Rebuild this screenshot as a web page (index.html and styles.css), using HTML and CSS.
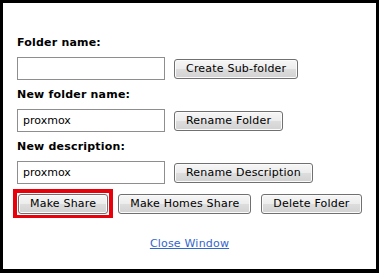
FILE: index.html
```html
<!DOCTYPE html>
<html lang="en">
<head>
  <meta charset="UTF-8">
  <title>Folder Properties</title>
  <link rel="stylesheet" href="styles.css">
</head>
<body>
  <div class="window">
    <div class="label">Folder name:</div>
    <div class="row">
      <input type="text" class="field" value="">
      <button class="btn">Create Sub-folder</button>
    </div>
    <div class="label">New folder name:</div>
    <div class="row">
      <input type="text" class="field" value="proxmox">
      <button class="btn">Rename Folder</button>
    </div>
    <div class="label">New description:</div>
    <div class="row">
      <input type="text" class="field" value="proxmox">
      <button class="btn">Rename Description</button>
    </div>
    <div class="actions">
      <span class="highlight"><button class="btn">Make Share</button></span>
      <button class="btn">Make Homes Share</button>
      <button class="btn">Delete Folder</button>
    </div>
    <div class="close">
      <a href="#">Close Window</a>
    </div>
  </div>
</body>
</html>
```

FILE: styles.css
```css
html, body {
  margin: 0;
  padding: 0;
  background-color: #000;
}
body {
  font-family: "DejaVu Sans", Verdana, sans-serif;
  font-size: 11px;
  color: #000;
}
.window {
  box-sizing: border-box;
  width: 379px;
  height: 273px;
  border: 3px solid #000;
  border-bottom-width: 4px;
  background-color: #fff;
  padding: 33px 0 0 14px;
}
.label {
  font-weight: bold;
  line-height: 14px;
  height: 14px;
  letter-spacing: 0.2px;
}
.row {
  display: flex;
  align-items: center;
  gap: 9px;
  margin: 7px 0 8px;
}
.field {
  box-sizing: border-box;
  width: 148px;
  height: 23px;
  margin: 0;
  padding: 0 5px;
  border: 1px solid #8e8e8e;
  font-family: inherit;
  font-size: 11px;
  color: #000;
  outline: none;
}
.btn {
  box-sizing: border-box;
  height: 20px;
  margin: 0;
  padding: 0 11px;
  border: 1px solid #707070;
  border-radius: 3px;
  background: linear-gradient(#f6f6f6 0%, #ececec 50%, #dddddd 51%, #d2d2d2 100%);
  box-shadow: inset 0 0 0 1px #fbfbfb;
  font-family: inherit;
  font-size: 11px;
  letter-spacing: 0.2px;
  color: #000;
  line-height: 18px;
}
.actions {
  display: flex;
  align-items: center;
  gap: 10px;
  margin: -3px 0 0 -4px;
}
.highlight {
  display: flex;
  border: 4px solid #e8000b;
  border-bottom-width: 3px;
  padding: 1px;
  margin-right: -5px;
}
.close {
  text-align: center;
  margin-top: 19px;
  line-height: 14px;
  padding-right: 14px;
}
.close a {
  color: #3366cc;
  text-decoration: underline;
  letter-spacing: 0.2px;
}
```
